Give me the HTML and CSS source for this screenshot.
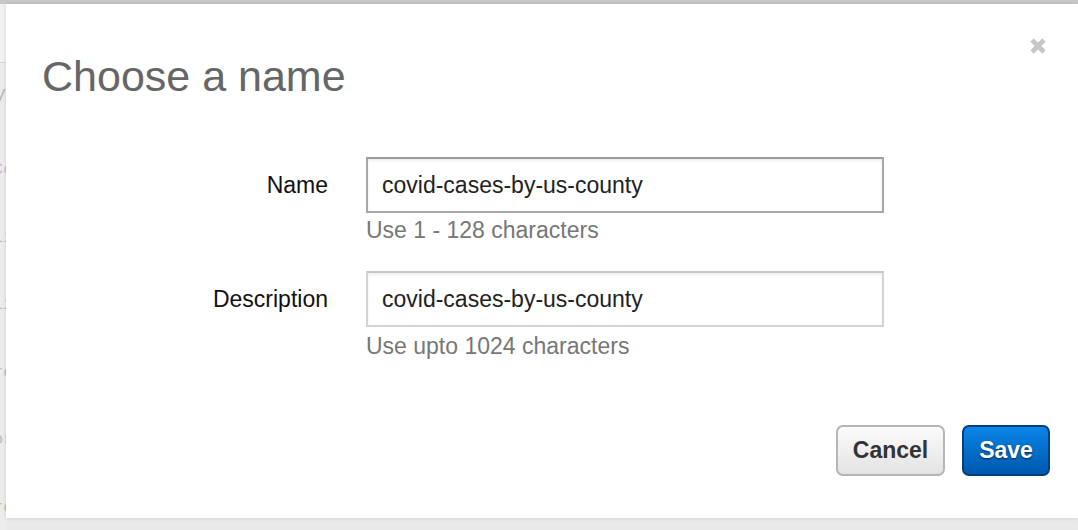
FILE: index.html
```html
<!DOCTYPE html>
<html lang="en">
<head>
<meta charset="utf-8">
<title>Choose a name</title>
<link rel="stylesheet" href="styles.css">
</head>
<body>
<div class="page">
  <div class="topbar"></div>
  <div class="side">
    <div class="side-head"></div>
    <div class="side-title">y</div>
    <div class="code">
      <div class="ln pink">Co</div>
      <div class="ln">li</div>
      <div class="ln">li</div>
      <div class="ln">re</div>
      <div class="ln">or</div>
      <div class="ln">re</div>
      <div class="ln pink">ui</div>
      <div class="ln pink">ui</div>
      <div class="ln pink">ui</div>
      <div class="ln pink">I</div>
      <div class="ln orange">se</div>
      <div class="ln"> s</div>
    </div>
    <div class="side-rule"></div>
    <div class="side-blue">r</div>
  </div>
</div>

<div class="modal" role="dialog" aria-labelledby="dlg-title">
  <button class="close" aria-label="Close">
    <svg width="18" height="18" viewBox="0 0 18 18"><path d="M3 3 L15 15 M15 3 L3 15" stroke="#c6c6c6" stroke-width="4.6" stroke-linecap="butt"/></svg>
  </button>
  <h1 class="title" id="dlg-title">Choose a name</h1>
  <div class="form">
    <label class="label" for="f-name">Name</label>
    <div class="field">
      <input class="input focused" id="f-name" type="text" value="covid-cases-by-us-county">
      <div class="hint">Use 1 - 128 characters</div>
    </div>
    <label class="label" for="f-desc">Description</label>
    <div class="field">
      <input class="input" id="f-desc" type="text" value="covid-cases-by-us-county">
      <div class="hint hint-2">Use upto 1024 characters</div>
    </div>
  </div>
  <div class="footer">
    <button class="btn btn-cancel">Cancel</button>
    <button class="btn btn-save">Save</button>
  </div>
</div>
</body>
</html>
```

FILE: styles.css
```css
html, body {
  margin: 0;
  padding: 0;
  height: 100%;
}
body {
  background: #e9e9e9;
  overflow: hidden;
  font-family: "Liberation Sans", Arial, Helvetica, sans-serif;
  position: relative;
}

/* dimmed page behind the dialog */
.page {
  height: 100%;
  display: flex;
  flex-direction: column;
}
.topbar {
  height: 4px;
  background: #c9c9c9;
  flex: none;
}
.side {
  width: 6px;
  overflow: hidden;
  display: flex;
  flex-direction: column;
  background: #ececec;
}
.side-head {
  height: 58px;
  background: #f1f1f1;
  border-bottom: 1px solid #d6d6d6;
  flex: none;
}
.side-title {
  font-family: "Liberation Mono", monospace;
  font-size: 20px;
  color: #b9b9b9;
  margin-left: -6px;
  margin-top: 20px;
  height: 30px;
}
.code {
  font-family: "Liberation Mono", monospace;
  font-size: 17px;
  line-height: 22.5px;
  margin-left: -7px;
  margin-top: 8px;
  color: #bcbcbc;
  white-space: pre;
}
.code .pink { color: #d2b2d8; }
.code .orange { color: #e6b7ad; }
.side-rule {
  margin-top: 26px;
  height: 1px;
  background: #d6d6d6;
}
.side-blue {
  margin-top: 37px;
  height: 52px;
  background: #a9c5df;
  color: #eef4fa;
  font-size: 20px;
  line-height: 40px;
  text-indent: -6px;
}

/* dialog */
.modal {
  position: absolute;
  left: 6px;
  top: 4px;
  width: 1072px;
  height: 514px;
  background: #fff;
  box-shadow: 0 0 4px rgba(0, 0, 0, 0.12);
  box-sizing: border-box;
  padding: 48px 0 0 36px;
}
.close {
  position: absolute;
  top: 33px;
  left: 1023px;
  width: 18px;
  height: 18px;
  padding: 0;
  border: 0;
  background: none;
  display: flex;
}
.title {
  margin: 0;
  font-weight: normal;
  font-size: 43px;
  line-height: 48px;
  color: #666;
}
.form {
  margin-top: 57px;
  display: grid;
  grid-template-columns: 286px 518px;
  column-gap: 38px;
  row-gap: 28px;
}
.label {
  font-size: 23px;
  line-height: 56px;
  height: 56px;
  text-align: right;
  color: #111;
}
.field {
  display: flex;
  flex-direction: column;
}
.input {
  box-sizing: border-box;
  width: 518px;
  height: 56px;
  margin: 0;
  padding: 0 14px;
  font-family: "Liberation Sans", Arial, Helvetica, sans-serif;
  font-size: 23px;
  color: #222;
  background: #fff;
  border: 2px solid #d3d3d3;
  border-top-color: #c6c6c6;
  border-radius: 0;
  box-shadow: inset 0 2px 3px rgba(0, 0, 0, 0.07);
  outline: none;
}
.input.focused {
  border-color: #a8a8a8;
  border-top-color: #9c9c9c;
}
.hint {
  margin-top: 4px;
  font-size: 23px;
  line-height: 26px;
  color: #777;
}
.hint-2 {
  margin-top: 6px;
}
.footer {
  margin-top: 66px;
  display: flex;
  justify-content: flex-end;
  gap: 17px;
  padding-right: 28px;
}
.btn {
  box-sizing: border-box;
  height: 51px;
  border-radius: 7px;
  font-family: "Liberation Sans", Arial, Helvetica, sans-serif;
  font-weight: bold;
  font-size: 23px;
  padding: 0;
  cursor: pointer;
}
.btn-cancel {
  width: 109px;
  color: #333;
  border: 2px solid #b5b5b5;
  background: linear-gradient(#fbfbfb, #e3e3e3);
}
.btn-save {
  width: 88px;
  color: #fff;
  border: 2px solid #003f7d;
  background: linear-gradient(#0a86e8, #0057ae);
  text-shadow: 0 1px 2px rgba(0, 0, 0, 0.65);
}
```
